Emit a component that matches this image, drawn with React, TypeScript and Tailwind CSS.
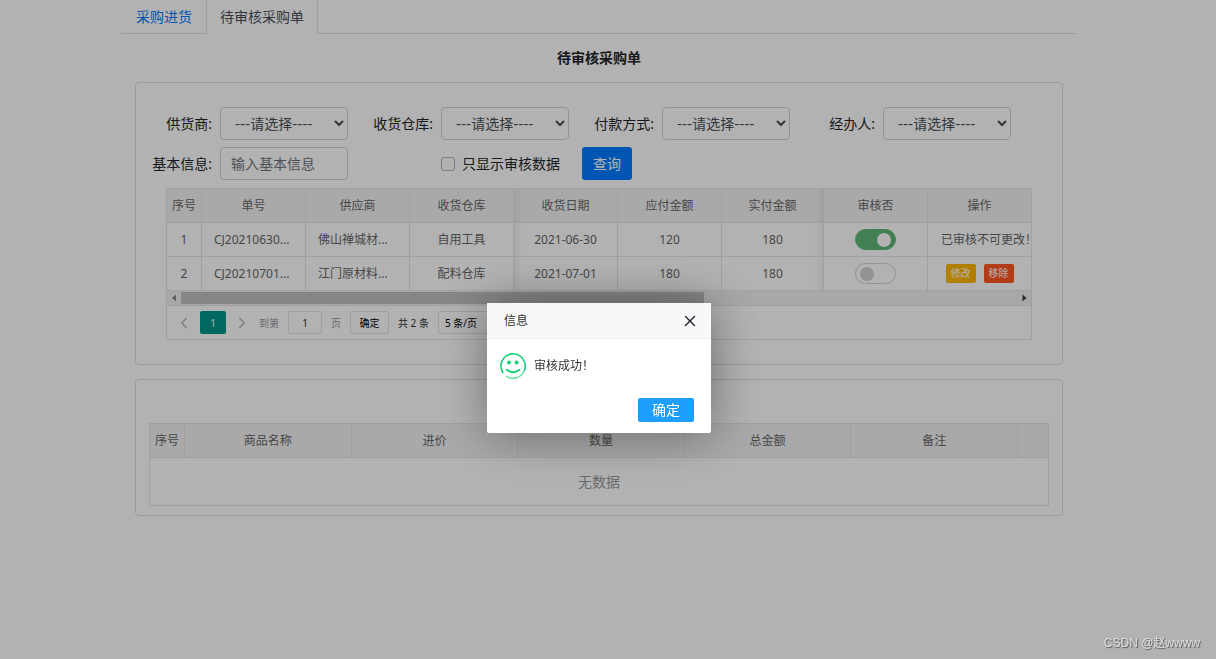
import React, { useState } from 'react';
import { ChevronLeft, ChevronRight, X } from 'lucide-react';

interface Order {
  id: number;
  code: string;
  supplier: string;
  warehouse: string;
  date: string;
  payable: number;
  paid: number;
  approved: boolean;
}

const orders: Order[] = [
  { id: 1, code: 'CJ20210630...', supplier: '佛山禅城材...', warehouse: '自用工具', date: '2021-06-30', payable: 120, paid: 180, approved: true },
  { id: 2, code: 'CJ20210701...', supplier: '江门原材料...', warehouse: '配料仓库', date: '2021-07-01', payable: 180, paid: 180, approved: false },
];

const filters = [
  { id: 'supplier', label: '供货商:' },
  { id: 'warehouse', label: '收货仓库:' },
  { id: 'payment', label: '付款方式:' },
  { id: 'handler', label: '经办人:' },
];

const orderColumns = ['序号', '单号', '供应商', '收货仓库', '收货日期', '应付金额', '实付金额', '审核否', '操作'];
const goodsColumns = ['序号', '商品名称', '进价', '数量', '总金额', '备注', ''];

const leftFrozenEdge =
  "relative after:absolute after:inset-y-0 after:left-0 after:w-2 after:bg-linear-to-r after:from-black/5 after:to-transparent after:content-['']";
const rightFrozenEdge =
  "relative after:absolute after:inset-y-0 after:right-0 after:w-2 after:bg-linear-to-l after:from-black/5 after:to-transparent after:content-['']";

const edgeClass = (index: number) => {
  if (index === 4) return leftFrozenEdge;
  if (index === 6) return rightFrozenEdge;
  return '';
};

const columnWidth = (index: number) => {
  if (index === 0) return 'w-[35px]';
  if (index === 6) return '';
  if (index === 8) return 'w-[103px]';
  return 'w-[104px]';
};

const Tabs: React.FC = () => (
  <nav className="flex h-[34px] border-b border-[#dee2e6] text-sm leading-[33px]">
    <a href="#purchase" className="px-[15px] text-[#007bff]">
      采购进货
    </a>
    <a href="#pending" aria-current="page" className="-ml-px h-[34px] border-x border-[#dee2e6] bg-white px-[13px] text-[#495057]">
      待审核采购单
    </a>
  </nav>
);

const Filters: React.FC = () => {
  const [onlyApproved, setOnlyApproved] = useState(false);

  return (
    <form className="grid grid-cols-4 gap-x-[13px] gap-y-[7px] pr-[51px] pl-1 text-sm text-[#212529]" onSubmit={(e) => e.preventDefault()}>
      {filters.map((filter) => (
        <div key={filter.id} className="flex items-center gap-2">
          <label htmlFor={filter.id} className="w-[72px] shrink-0 text-right">
            {filter.label}
          </label>
          <select
            id={filter.id}
            className="h-[33px] min-w-0 flex-1 rounded border border-[#ced4da] bg-white pl-[10px] font-['DejaVu_Sans','Noto_Sans_CJK_SC',sans-serif] text-[#495057]"
          >
            <option>---请选择----</option>
          </select>
        </div>
      ))}
      <div className="flex items-center gap-2">
        <label htmlFor="info" className="w-[72px] shrink-0 text-right">
          基本信息:
        </label>
        <input
          id="info"
          type="text"
          placeholder="输入基本信息"
          className="h-[33px] min-w-0 flex-1 rounded border border-[#ced4da] bg-white px-[10px] placeholder:text-[#6c757d]"
        />
      </div>
      <div className="col-span-3 flex items-center pl-20">
        <input
          id="only-approved"
          type="checkbox"
          checked={onlyApproved}
          onChange={(e) => setOnlyApproved(e.target.checked)}
          className="size-[14px] appearance-none rounded-[3px] border border-[#adb5bd] bg-white checked:bg-[#007bff]"
        />
        <label htmlFor="only-approved" className="pl-[7px]">
          只显示审核数据
        </label>
        <button type="submit" className="ml-[22px] h-[33px] rounded-[3px] bg-[#007bff] px-[11px] text-white">
          查询
        </button>
      </div>
    </form>
  );
};

const OrderTable: React.FC = () => {
  const [approved, setApproved] = useState(orders.map((order) => order.approved));

  const toggle = (index: number) => {
    setApproved((prev) => prev.map((value, i) => (i === index ? !value : value)));
  };

  return (
    <div className="mr-[30px] ml-[30px] border border-[#e6e6e6] text-[#666]">
      <table className="w-full table-fixed border-separate border-spacing-0 text-center text-xs">
        <colgroup>
          {orderColumns.map((name, index) => (
            <col key={name} className={columnWidth(index)} />
          ))}
        </colgroup>
        <thead>
          <tr className="h-[34px] bg-[#f2f2f2]">
            {orderColumns.map((name, index) => (
              <th key={name} scope="col" className={`border-r border-b border-[#e6e6e6] font-normal last:border-r-0 ${edgeClass(index)}`}>
                {name}
              </th>
            ))}
          </tr>
        </thead>
        <tbody>
          {orders.map((order, row) => (
            <tr key={order.id} className="h-[34px]">
              <td className="border-r border-b border-[#e6e6e6]">{order.id}</td>
              <td className="border-r border-b border-[#e6e6e6] pl-3 text-left">{order.code}</td>
              <td className="border-r border-b border-[#e6e6e6] pl-3 text-left">{order.supplier}</td>
              <td className="border-r border-b border-[#e6e6e6]">{order.warehouse}</td>
              <td className={`border-r border-b border-[#e6e6e6] ${leftFrozenEdge}`}>{order.date}</td>
              <td className="border-r border-b border-[#e6e6e6]">{order.payable}</td>
              <td className={`border-r border-b border-[#e6e6e6] ${rightFrozenEdge}`}>{order.paid}</td>
              <td className="border-r border-b border-[#e6e6e6]">
                <input
                  type="checkbox"
                  role="switch"
                  aria-label="审核否"
                  checked={approved[row]}
                  onChange={() => toggle(row)}
                  className="relative mx-auto block h-[21px] w-[41px] appearance-none rounded-full border border-[#d2d2d2] bg-white before:absolute before:top-[3px] before:left-1 before:size-[14px] before:rounded-full before:bg-[#d2d2d2] before:content-[''] checked:border-[#5fb878] checked:bg-[#5fb878] checked:before:left-[21px] checked:before:bg-white"
                />
              </td>
              <td className="border-b border-[#e6e6e6] whitespace-nowrap">
                {order.approved ? (
                  <div className="pl-[13px] text-left">已审核不可更改！</div>
                ) : (
                  <div className="flex justify-center gap-2 text-[10px] leading-[19px] text-white">
                    <button type="button" className="rounded-xs bg-[#ffb800] px-[5px]">
                      修改
                    </button>
                    <button type="button" className="rounded-xs bg-[#ff5722] px-[5px]">
                      移除
                    </button>
                  </div>
                )}
              </td>
            </tr>
          ))}
        </tbody>
      </table>

      {/* Horizontal scrollbar */}
      <div className="flex h-[14px] items-center bg-[#f1f1f1]">
        <svg viewBox="0 0 14 14" className="size-[14px]" aria-hidden="true">
          <path d="M9 3.5v7L5 7z" fill="#8a8a8a" />
        </svg>
        <div className="flex h-3 flex-1">
          <div className="w-[62.5%] bg-[#c1c1c1]" />
        </div>
        <svg viewBox="0 0 14 14" className="size-[14px]" aria-hidden="true">
          <path d="M5.5 3.5v7l4-3.5z" fill="#404040" />
        </svg>
      </div>

      {/* Pagination */}
      <div className="flex h-[34px] items-center border-t border-[#e6e6e6] pl-2 text-[10px] leading-[22px] text-[#333]">
        <button type="button" aria-label="上一页" className="text-[#b8b8b8]">
          <ChevronLeft size={18} strokeWidth={2} />
        </button>
        <button type="button" className="ml-[7px] h-[23px] w-[26px] rounded-xs bg-[#009688] text-white">
          1
        </button>
        <button type="button" aria-label="下一页" className="ml-[7px] text-[#b8b8b8]">
          <ChevronRight size={18} strokeWidth={2} />
        </button>
        <label htmlFor="page" className="ml-2 text-[#999]">
          到第
        </label>
        <input
          id="page"
          type="text"
          defaultValue="1"
          className="ml-[9px] h-[23px] w-[34px] rounded-xs border border-[#e2e2e2] bg-white text-center"
        />
        <span className="ml-[9px] text-[#999]">页</span>
        <button type="button" className="ml-[9px] h-[23px] w-[39px] rounded-xs border border-[#e2e2e2] bg-white text-black">
          确定
        </button>
        <span className="ml-[9px]">共 2 条</span>
        <select aria-label="每页条数" className="ml-[9px] h-[23px] w-[64px] rounded-xs border border-[#e2e2e2] bg-white pl-[2px] text-black">
          <option>5 条/页</option>
        </select>
      </div>
    </div>
  );
};

const GoodsTable: React.FC = () => (
  <div className="mx-[13px] border border-[#e6e6e6] text-[#666]">
    <table className="w-full table-fixed border-separate border-spacing-0 text-center text-xs">
      <colgroup>
        {goodsColumns.map((name, index) => (
          <col key={index} className={index === 0 ? 'w-[35px]' : name === '' ? 'w-[30px]' : ''} />
        ))}
      </colgroup>
      <thead>
        <tr className="h-[34px] bg-[#f2f2f2]">
          {goodsColumns.map((name, index) => (
            <th key={index} scope="col" className="border-r border-b border-[#e6e6e6] font-normal last:border-r-0">
              {name}
            </th>
          ))}
        </tr>
      </thead>
      <tbody>
        <tr className="h-[47px]">
          <td colSpan={goodsColumns.length} className="text-sm text-[#999]">
            无数据
          </td>
        </tr>
      </tbody>
    </table>
  </div>
);

interface MessageDialogProps {
  onClose: () => void;
}

const MessageDialog: React.FC<MessageDialogProps> = ({ onClose }) => (
  <div className="fixed inset-0 z-10 flex items-center justify-center bg-black/30 pt-[77px] pr-[18px]">
    <div
      role="dialog"
      aria-labelledby="dialog-title"
      className="w-[224px] rounded-xs bg-white text-xs text-[#333] shadow-[1px_1px_50px_rgba(0,0,0,0.4)]"
    >
      <div className="flex h-9 items-center justify-between border-b border-[#eee] bg-[#f8f8f8] pr-3 pl-[17px]">
        <h2 id="dialog-title">信息</h2>
        <button type="button" aria-label="关闭" onClick={onClose} className="text-[#2d2c3b]">
          <X size={18} strokeWidth={2} />
        </button>
      </div>
      <div className="flex items-center gap-2 px-[13px] pt-[14px]">
        <svg viewBox="0 0 26 26" className="size-[26px]" fill="none" aria-hidden="true">
          <path d="M3.2 20.2A12.2 12.2 0 1 1 24.2 18" stroke="#16d075" strokeWidth="1.6" />
          <path d="M24.2 18A12.2 12.2 0 0 1 6.2 23.1" stroke="#16d075" strokeWidth="1.4" opacity="0.65" />
          <circle cx="9" cy="9.6" r="2" fill="#16d075" />
          <circle cx="16.6" cy="9.6" r="2" fill="#16d075" />
          <path d="M6.8 16.8Q13 21.6 19.4 16.8" stroke="#16d075" strokeWidth="2" strokeLinecap="round" />
        </svg>
        <p>审核成功！</p>
      </div>
      <div className="flex justify-end px-[17px] pt-[19px] pb-[11px]">
        <button type="button" onClick={onClose} className="h-6 rounded-xs bg-[#1e9fff] px-[14px] text-sm leading-6 text-white">
          确定
        </button>
      </div>
    </div>
  </div>
);

const App: React.FC = () => {
  const [showMessage, setShowMessage] = useState(true);

  return (
    <div className="min-h-screen bg-white pr-[18px] font-['Noto_Sans','Noto_Sans_CJK_SC',sans-serif]">
      <main className="mx-auto max-w-[956px]">
        <Tabs />
        <h1 className="text-center text-sm leading-[48px] font-bold text-[#212529]">待审核采购单</h1>
        <div className="space-y-[14px] px-[14px]">
          <section className="space-y-2 rounded border border-[#dfdfdf] pt-6 pb-6">
            <Filters />
            <OrderTable />
          </section>
          <section className="rounded border border-[#dfdfdf] pt-[43px] pb-[9px]">
            <GoodsTable />
          </section>
        </div>
      </main>
      {showMessage && <MessageDialog onClose={() => setShowMessage(false)} />}
      <div className="fixed right-4 bottom-2 z-20 font-['Liberation_Sans','Noto_Sans_CJK_SC',sans-serif] text-xs leading-4 text-[#e0e0e0] [text-shadow:1px_1px_1px_#555]">
        CSDN @赵wwww
      </div>
    </div>
  );
};

export default App;
